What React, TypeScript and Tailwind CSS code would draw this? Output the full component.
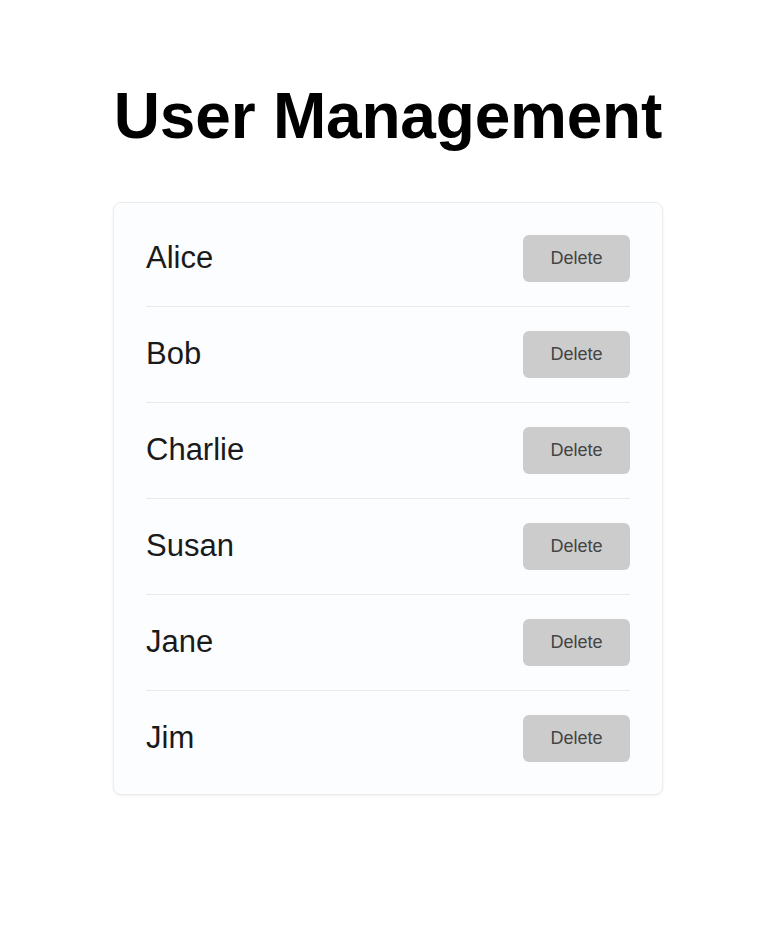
import React, { useState } from "react";

const initialUsers = ["Alice", "Bob", "Charlie", "Susan", "Jane", "Jim"];

export default function App() {
    const [users, setUsers] = useState<string[]>(initialUsers);

    const deleteUser = (name: string) => {
        setUsers(users.filter((u) => u !== name));
    };

    return (
        <div className="min-h-screen bg-white pr-1 font-['Liberation_Sans',Arial,sans-serif]">
            <div className="mx-auto w-[550px] pt-[84px]">
                <h1 className="-mx-8 whitespace-nowrap text-center text-[64px] font-bold leading-none tracking-[-0.2px] text-black">User Management</h1>
                <div className="mt-[54px] rounded-lg border border-[#ececec] bg-[#fcfdfe] px-8 py-8 shadow-[0_1px_3px_rgba(0,0,0,0.06)]">
                    {users.map((user, i) => (
                        <div
                            key={user}
                            className={`flex items-center justify-between py-6 first:pt-0 last:pb-0 ${i < users.length - 1 ? "border-b border-[#eaeaea]" : ""}`}
                        >
                            <span className="text-[31px] text-[#1a1a1a]">{user}</span>
                            <button
                                className="h-[47px] w-[107px] rounded-md bg-[#cccccc] text-[18px] text-[#444444]"
                                onClick={() => deleteUser(user)}
                            >
                                Delete
                            </button>
                        </div>
                    ))}
                </div>
            </div>
        </div>
    );
}
